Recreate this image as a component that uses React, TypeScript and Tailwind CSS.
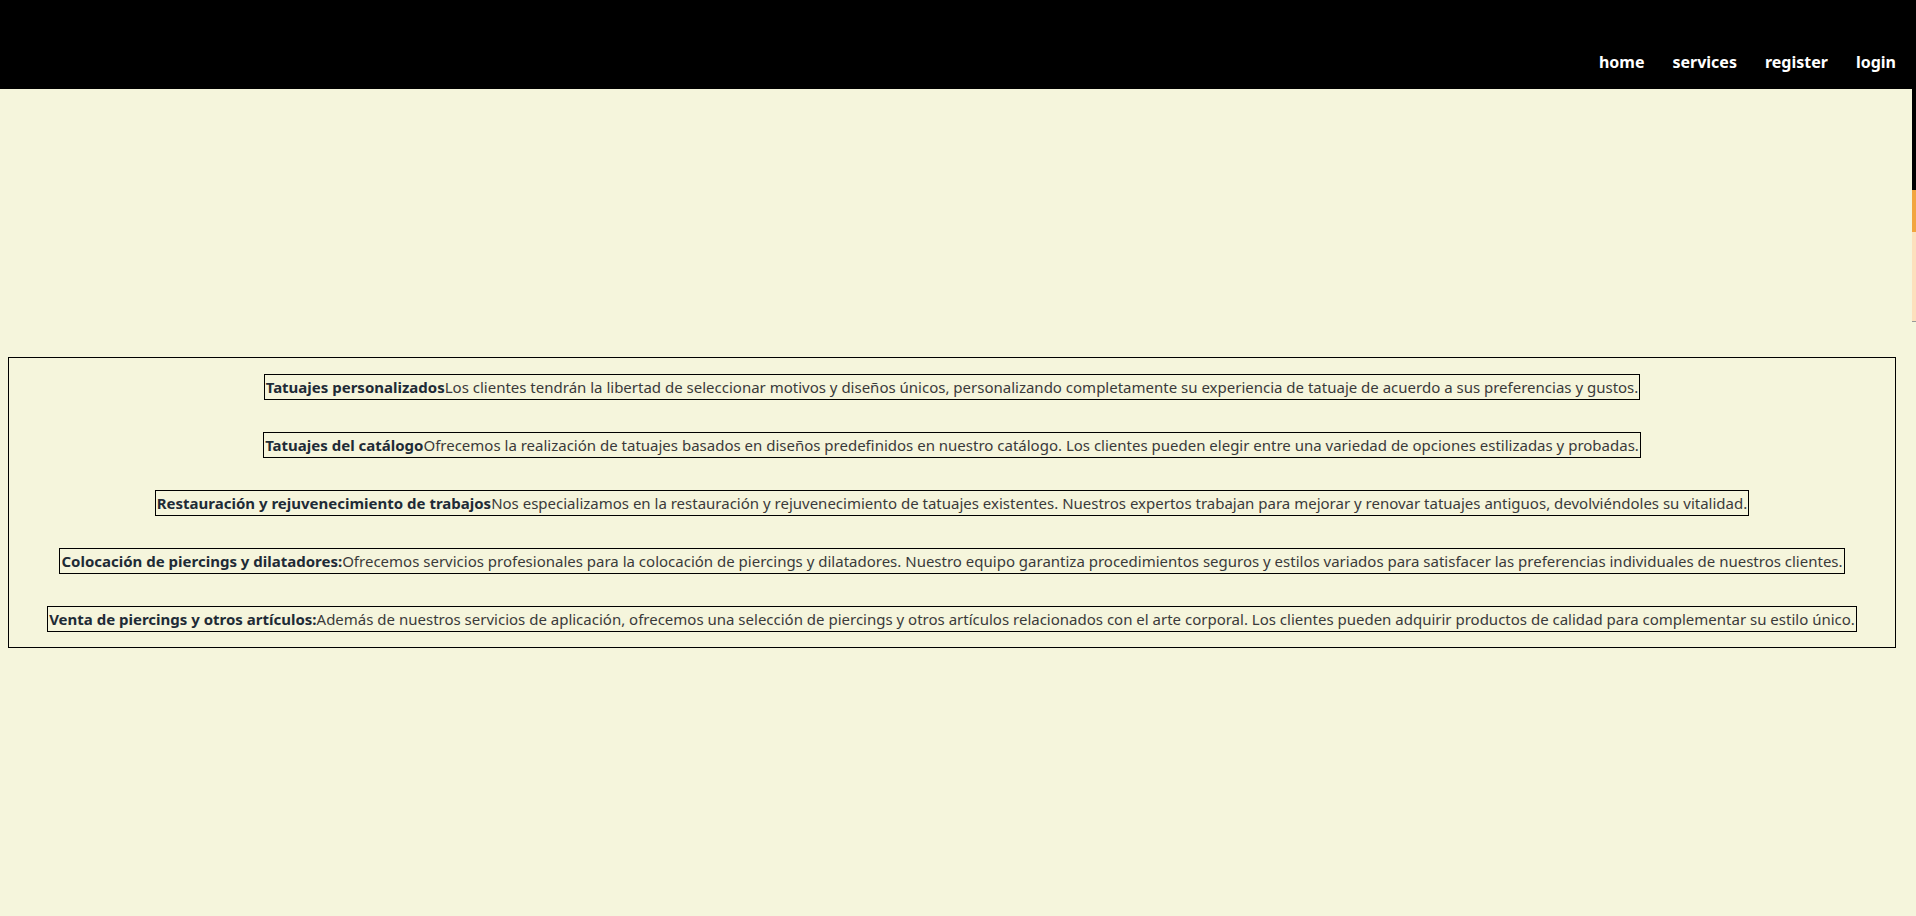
const services = [
  {
    title: "Tatuajes personalizados",
    text: "Los clientes tendrán la libertad de seleccionar motivos y diseños únicos, personalizando completamente su experiencia de tatuaje de acuerdo a sus preferencias y gustos.",
  },
  {
    title: "Tatuajes del catálogo",
    text: "Ofrecemos la realización de tatuajes basados en diseños predefinidos en nuestro catálogo. Los clientes pueden elegir entre una variedad de opciones estilizadas y probadas.",
  },
  {
    title: "Restauración y rejuvenecimiento de trabajos",
    text: "Nos especializamos en la restauración y rejuvenecimiento de tatuajes existentes. Nuestros expertos trabajan para mejorar y renovar tatuajes antiguos, devolviéndoles su vitalidad.",
  },
  {
    title: "Colocación de piercings y dilatadores:",
    text: "Ofrecemos servicios profesionales para la colocación de piercings y dilatadores. Nuestro equipo garantiza procedimientos seguros y estilos variados para satisfacer las preferencias individuales de nuestros clientes.",
  },
  {
    title: "Venta de piercings y otros artículos:",
    text: "Además de nuestros servicios de aplicación, ofrecemos una selección de piercings y otros artículos relacionados con el arte corporal. Los clientes pueden adquirir productos de calidad para complementar su estilo único.",
  },
];

const links = ["home", "services", "register", "login"];

export default function App() {
  return (
    <div
      className="min-h-screen bg-[#f5f5dc] flex flex-col"
      style={{ fontFamily: '"Noto Sans", "Open Sans", sans-serif' }}
    >
      <header className="h-[89px] bg-black flex items-end justify-end pr-[20px] pb-[17px]">
        <nav className="flex gap-[28px]">
          {links.map((l) => (
            <a key={l} className="text-white font-bold text-[16px] leading-[20px]">
              {l}
            </a>
          ))}
        </nav>
      </header>

      <div className="flex flex-1">
        <main className="flex-1 pt-[268px] pl-[8px] pr-[16px]">
          <section className="border border-black pt-[16px] pb-[15px] flex flex-col gap-[32px]">
            {services.map((s) => (
              <div key={s.title} className="text-center">
                <span className="inline-block border border-black px-[1px] text-[15px] leading-[24px] text-[#3a3a3a] whitespace-nowrap">
                  <strong className="text-[#1e2b36]">{s.title}</strong>
                  {s.text}
                </span>
              </div>
            ))}
          </section>
        </main>

        {/* bit of an element peeking in from the right edge */}
        <div className="w-[4px] flex flex-col">
          <div className="h-[101px] bg-black" />
          <div className="h-[42px] bg-[#f2a540]" />
          <div className="h-[90px] bg-[#fde0bd] border-b border-[#999]" />
        </div>
      </div>
    </div>
  );
}
